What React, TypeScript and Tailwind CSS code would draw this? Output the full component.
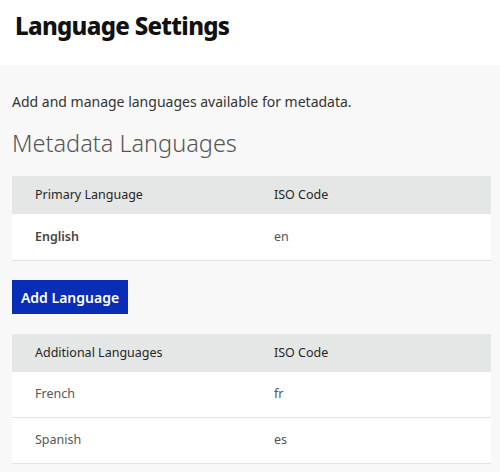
import React from "react";

const font = { fontFamily: '"Noto Sans", Inter, sans-serif' };

function Table({ head, rows, boldFirst, rowH }: { head: string; rows: [string, string][]; boldFirst?: boolean; rowH: string }) {
  return (
    <div className="mx-3 w-[479px]">
      <div className="flex h-[38px] items-center bg-[#e5e6e6] text-[12.5px] text-[#262626]">
        <div className="w-[262px] pl-[23px]">{head}</div>
        <div>ISO Code</div>
      </div>
      {rows.map(([a, b]) => (
        <div key={a} className={"flex items-center border-b border-[#e2e2e2] bg-white text-[12.5px] text-[#555] " + rowH}>
          <div className={"w-[262px] pl-[23px] " + (boldFirst ? "font-semibold text-[#444]" : "")}>{a}</div>
          <div>{b}</div>
        </div>
      ))}
    </div>
  );
}

export default function App() {
  return (
    <div style={font} className="h-[472px] w-[500px] bg-[#f8f8f8]">
      <div className="flex h-[65px] items-start bg-white pl-[15px] pt-[8px]">
        <h1 className="text-[24px] font-extrabold tracking-[-0.7px] text-[#111]">Language Settings</h1>
      </div>
      <p className="mx-3 mt-[26px] text-[14px] text-[#333]">Add and manage languages available for metadata.</p>
      <h2 className="mx-3 mt-[13px] h-[36px] text-[23.5px] leading-[36px] font-light text-[#555]">Metadata Languages</h2>
      <div className="mt-[15px]">
        <Table head="Primary Language" rows={[["English", "en"]]} boldFirst rowH="h-[47px]" />
      </div>
      <button className="mx-3 mt-[19px] flex h-[34px] w-[116px] items-center justify-center bg-[#0a2db8] text-[14px] font-semibold text-white">
        Add Language
      </button>
      <div className="mt-[20px]">
        <Table head="Additional Languages" rows={[["French", "fr"], ["Spanish", "es"]]} rowH="h-[46px]" />
      </div>
    </div>
  );
}
